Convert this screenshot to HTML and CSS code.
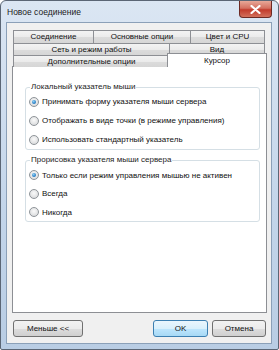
FILE: index.html
```html
<!DOCTYPE html>
<html>
<head>
<meta charset="UTF-8">
<title>Новое соединение</title>
<link rel="stylesheet" href="styles.css">
</head>
<body>
<div class="window">
	<div class="titlebar">
		<span class="title">Новое соединение</span>
		<span class="close">
			<svg width="11" height="9" viewBox="0 0 11 9">
				<path d="M1.5 1 L9.5 8 M9.5 1 L1.5 8" stroke="#fff" stroke-width="2.2" stroke-linecap="round"/>
			</svg>
		</span>
	</div>
	<div class="client">
		<div class="tabs">
			<div class="tab_row r1">
				<div class="tab w80">Соединение</div>
				<div class="tab w97">Основные опции</div>
				<div class="tab w75">Цвет и CPU</div>
			</div>
			<div class="tab_row r2">
				<div class="tab w156">Сеть и режим работы</div>
				<div class="tab w96">Вид</div>
			</div>
			<div class="tab_row r3">
				<div class="tab w156">Дополнительные опции</div>
				<div class="tab active">Курсор</div>
			</div>
		</div>
		<div class="panel">
			<div class="group">
				<div class="legend">Локальный указатель мыши</div>
				<label class="radio checked"><span class="dot"></span>Принимать форму указателя мыши сервера</label>
				<label class="radio"><span class="dot"></span>Отображать в виде точки (в режиме управления)</label>
				<label class="radio"><span class="dot"></span>Использовать стандартный указатель</label>
			</div>
			<div class="group g2">
				<div class="legend">Прорисовка указателя мыши сервера</div>
				<label class="radio checked"><span class="dot"></span>Только если режим управления мышью не активен</label>
				<label class="radio"><span class="dot"></span>Всегда</label>
				<label class="radio"><span class="dot"></span>Никогда</label>
			</div>
		</div>
		<div class="buttons">
			<div class="btn less">Меньше &lt;&lt;</div>
			<div class="spacer"></div>
			<div class="btn ok">OK</div>
			<div class="btn cancel">Отмена</div>
		</div>
	</div>
</div>
</body>
</html>
```

FILE: styles.css
```css
*{margin: 0;padding: 0;box-sizing: border-box;}
body{
	background: #fff;
	font-family: "Liberation Sans", Arial, sans-serif;
	font-size: 8px;
	color: #000;
	white-space: nowrap;
}
.window{
	width: 279px;
	height: 350px;
	border: 1px solid #5b6675;
	border-radius: 6px 6px 2px 2px;
	background: linear-gradient(to bottom, #dbe6f3 0%, #c3d5ea 60%, #b9cde4 100%);
	display: flex;
	flex-direction: column;
	padding: 0 6px 5px 5px;
}
.titlebar{
	height: 21px;
	display: flex;
	align-items: flex-start;
}
.title{
	flex: 1;
	font-size: 8.5px;
	color: #1b1b1b;
	padding: 6px 0 0 1px;
}
.close{
	width: 33px;
	height: 17px;
	border: 1px solid #6d2a24;
	border-top: none;
	border-radius: 0 0 4px 4px;
	background: linear-gradient(to bottom, #e8a898 0%, #d47060 45%, #c23b2c 55%, #d2705c 100%);
	display: flex;
	align-items: center;
	justify-content: center;
}
.client{
	flex: 1;
	border: 1px solid #8ba0b8;
	background: #f0f0f0;
	padding: 7px 4px 0 5px;
	display: flex;
	flex-direction: column;
}
.tabs{
	padding-left: 1px;
}
.tab_row{
	display: flex;
}
.tab{
	height: 12px;
	border: 1px solid #8d8f94;
	border-bottom: none;
	margin-right: -1px;
	background: linear-gradient(to bottom, #f3f3f3 0%, #ebebeb 50%, #dcdcdc 51%, #d6d6d6 100%);
	text-align: center;
	line-height: 11px;
	color: #111;
}
.r1 .tab{height: 13px;line-height: 12px;}
.w80{width: 81px;}
.w97{width: 98px;}
.w75{width: 75px;}
.w156{width: 157px;}
.w96{width: 96px;}
.r3{
	position: relative;
	z-index: 2;
	margin-bottom: -1px;
}
.tab.active{
	width: 100px;
	height: 14px;
	margin-top: -2px;
	margin-left: -2px;
	background: #fff;
	line-height: 13px;
}
.panel{
	height: 247px;
	border: 1px solid #8d8f94;
	background: #fff;
	padding: 20px 6px 0 12px;
}
.group{
	border: 1px solid #d5dfe5;
	border-radius: 3px;
	height: 63px;
	padding: 4px 0 0 3px;
	position: relative;
}
.g2{
	margin-top: 10px;
	height: 62px;
	padding-top: 5px;
}
.g2 .radio{height: 18.5px;}
.legend{
	position: absolute;
	left: 4px;
	top: -6px;
	background: #fff;
	padding: 0 1px;
	color: #1d1d1d;
}
.radio{
	display: flex;
	align-items: center;
	height: 19px;
	color: #111;
}
.dot{
	width: 10px;
	height: 10px;
	border: 1px solid #8f9499;
	border-radius: 50%;
	background: radial-gradient(circle at 50% 40%, #fafafa 0%, #e2e3e4 60%, #cfd0d2 100%);
	margin-right: 3px;
	position: relative;
	flex-shrink: 0;
}
.checked .dot::after{
	content: "";
	position: absolute;
	left: 2px;
	top: 2px;
	width: 4px;
	height: 4px;
	border-radius: 50%;
	background: radial-gradient(circle at 40% 35%, #8fd0f5 0%, #2c82c8 60%, #1a5c9a 100%);
}
.buttons{
	display: flex;
	padding: 7px 1px 0 1px;
	gap: 4px;
}
.spacer{flex: 1;}
.btn{
	height: 17px;
	border: 1px solid #707070;
	border-radius: 3px;
	background: linear-gradient(to bottom, #f2f2f2 0%, #ebebeb 50%, #dddddd 51%, #cfcfcf 100%);
	text-align: center;
	line-height: 15px;
	color: #111;
}
.less{width: 70px;}
.ok{
	width: 55px;
	border-color: #3c7fb1;
	background: linear-gradient(to bottom, #eaf6fd 0%, #d9f0fc 50%, #bee6fd 51%, #a7d9f5 100%);
}
.cancel{width: 54px;}
```
